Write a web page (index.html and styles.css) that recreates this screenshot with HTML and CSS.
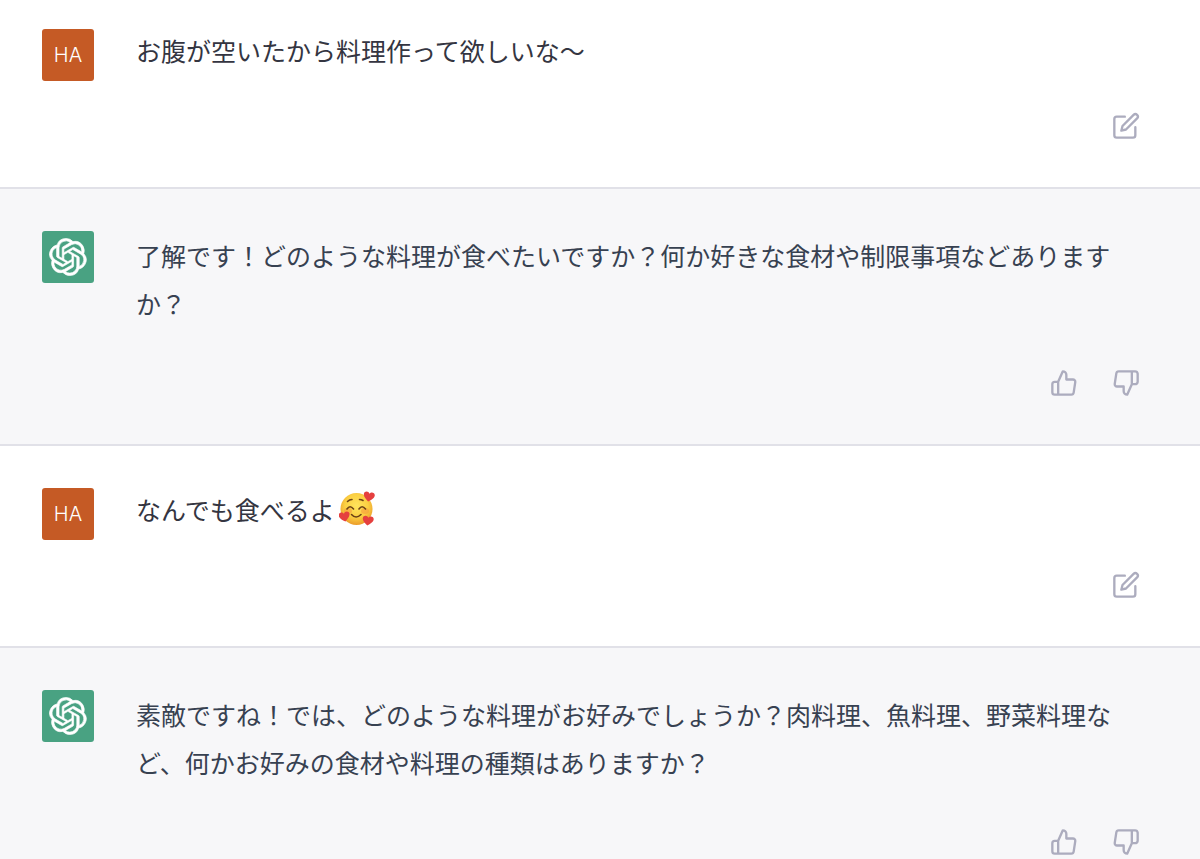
FILE: index.html
```html
<!DOCTYPE html>
<html lang="ja">
<head>
    <meta charset="UTF-8">
    <meta name="viewport" content="width=device-width, initial-scale=1.0">
    <title>Chat</title>
    <link rel="stylesheet" href="styles.css">
</head>
<body>

    <!-- shared icons -->
    <svg class="sprite" aria-hidden="true">
        <symbol id="icon-edit" viewBox="0 0 24 24">
            <path d="M11 4H4a2 2 0 0 0-2 2v14a2 2 0 0 0 2 2h14a2 2 0 0 0 2-2v-7"/>
            <path d="M18.5 2.5a2.121 2.121 0 0 1 3 3L12 15l-4 1 1-4 9.5-9.5z"/>
        </symbol>
        <symbol id="icon-up" viewBox="0 0 24 24">
            <path d="M14 9V5a3 3 0 0 0-3-3l-4 9v11h11.28a2 2 0 0 0 2-1.7l1.38-9a2 2 0 0 0-2-2.3zM7 22H4a2 2 0 0 1-2-2v-7a2 2 0 0 1 2-2h3"/>
        </symbol>
        <symbol id="icon-down" viewBox="0 0 24 24">
            <path d="M10 15v4a3 3 0 0 0 3 3l4-9V2H5.72a2 2 0 0 0-2 1.7l-1.38 9a2 2 0 0 0 2 2.3zm7-13h2.67A2.31 2.31 0 0 1 22 4v7a2.31 2.31 0 0 1-2.33 2H17"/>
        </symbol>
        <symbol id="icon-bot" viewBox="0 0 41 41">
            <path d="M37.532 16.87a9.963 9.963 0 0 0-.856-8.184 10.078 10.078 0 0 0-10.855-4.835A9.964 9.964 0 0 0 18.306.5a10.079 10.079 0 0 0-9.614 6.977 9.967 9.967 0 0 0-6.664 4.834 10.08 10.08 0 0 0 1.24 11.817 9.965 9.965 0 0 0 .856 8.185 10.079 10.079 0 0 0 10.855 4.835 9.965 9.965 0 0 0 7.516 3.35 10.078 10.078 0 0 0 9.617-6.981 9.967 9.967 0 0 0 6.663-4.834 10.079 10.079 0 0 0-1.243-11.813zM22.498 37.886a7.474 7.474 0 0 1-4.799-1.735c.061-.033.168-.091.237-.134l7.964-4.6a1.294 1.294 0 0 0 .655-1.134V19.054l3.366 1.944a.12.12 0 0 1 .066.092v9.299a7.505 7.505 0 0 1-7.49 7.496zM6.392 31.006a7.471 7.471 0 0 1-.894-5.023c.06.036.162.099.237.141l7.964 4.6a1.297 1.297 0 0 0 1.308 0l9.724-5.614v3.888a.12.12 0 0 1-.048.103l-8.051 4.649a7.504 7.504 0 0 1-10.24-2.744zM4.297 13.62A7.469 7.469 0 0 1 8.2 10.333c0 .068-.004.19-.004.274v9.201a1.294 1.294 0 0 0 .654 1.132l9.723 5.614-3.366 1.944a.12.12 0 0 1-.114.01L7.04 23.856a7.504 7.504 0 0 1-2.743-10.237zm27.658 6.437l-9.724-5.615 3.367-1.943a.121.121 0 0 1 .113-.01l8.052 4.648a7.498 7.498 0 0 1-1.158 13.528v-9.476a1.293 1.293 0 0 0-.65-1.132zm3.35-5.043c-.059-.037-.162-.099-.236-.141l-7.965-4.6a1.298 1.298 0 0 0-1.308 0l-9.723 5.614v-3.888a.12.12 0 0 1 .048-.103l8.05-4.645a7.497 7.497 0 0 1 11.135 7.763zm-21.063 6.929l-3.367-1.944a.12.12 0 0 1-.065-.092v-9.299a7.497 7.497 0 0 1 12.293-5.756 6.94 6.94 0 0 0-.236.134l-7.965 4.6a1.294 1.294 0 0 0-.654 1.132l-.006 11.225zm1.829-3.943l4.33-2.501 4.332 2.5v5l-4.331 2.5-4.331-2.5V18z" stroke-width="0.7"/>
        </symbol>
    </svg>

    <main class="chat">
        <div class="message user">
            <div class="avatar">HA</div>
            <div class="body">
                <p class="text">お腹が空いたから料理作って欲しいな〜</p>
                <div class="actions">
                    <button class="action-btn" type="button" aria-label="編集"><svg class="icon"><use href="#icon-edit"/></svg></button>
                </div>
            </div>
        </div>

        <div class="message bot">
            <div class="avatar"><svg class="logo"><use href="#icon-bot"/></svg></div>
            <div class="body">
                <p class="text">了解です！どのような料理が食べたいですか？何か好きな食材や制限事項などありますか？</p>
                <div class="actions">
                    <button class="action-btn" type="button" aria-label="良い"><svg class="icon"><use href="#icon-up"/></svg></button>
                    <button class="action-btn" type="button" aria-label="悪い"><svg class="icon"><use href="#icon-down"/></svg></button>
                </div>
            </div>
        </div>

        <div class="message user">
            <div class="avatar">HA</div>
            <div class="body">
                <p class="text">なんでも食べるよ<svg class="emoji" viewBox="0 0 36 36" role="img" aria-label="🥰">
                    <defs>
                        <radialGradient id="face" cx="50%" cy="40%" r="60%">
                            <stop offset="0" stop-color="#ffe45c"/>
                            <stop offset="0.6" stop-color="#fbd043"/>
                            <stop offset="1" stop-color="#eb9c2a"/>
                        </radialGradient>
                        <path id="heart" d="M0 5C-2 3.500-5.500 1-5.500-1.800c0-3 4.200-3.800 5.500-.9 1.300-2.900 5.500-2.100 5.500.9C5.500 1 2 3.500 0 5z"/>
                    </defs>
                    <circle cx="17.500" cy="18" r="16" fill="url(#face)"/>
                    <ellipse cx="9" cy="20" rx="4" ry="3" fill="#f5913c" opacity="0.5"/>
                    <ellipse cx="26" cy="20" rx="4" ry="3" fill="#f5913c" opacity="0.5"/>
                    <g fill="none" stroke="#6d4216" stroke-width="1.600" stroke-linecap="round">
                        <path d="M8.500 10.500q2-2 4.500-2M20.500 8.500q2 0 3.500 1"/>
                        <path d="M8 18q3-4.500 6.500 0M20 18q3-4.500 6.500 0"/>
                        <path d="M12.500 23.500q4.500 5 9.500 0"/>
                    </g>
                    <g fill="#e5403f">
                        <use href="#heart" transform="translate(30 5.500) rotate(10)"/>
                        <use href="#heart" transform="translate(5.500 25.500) rotate(-12)"/>
                        <use href="#heart" transform="translate(29 29.500) rotate(8)"/>
                    </g>
                </svg></p>
                <div class="actions">
                    <button class="action-btn" type="button" aria-label="編集"><svg class="icon"><use href="#icon-edit"/></svg></button>
                </div>
            </div>
        </div>

        <div class="message bot">
            <div class="avatar"><svg class="logo"><use href="#icon-bot"/></svg></div>
            <div class="body">
                <p class="text">素敵ですね！では、どのような料理がお好みでしょうか？肉料理、魚料理、野菜料理など、何かお好みの食材や料理の種類はありますか？</p>
                <div class="actions">
                    <button class="action-btn" type="button" aria-label="良い"><svg class="icon"><use href="#icon-up"/></svg></button>
                    <button class="action-btn" type="button" aria-label="悪い"><svg class="icon"><use href="#icon-down"/></svg></button>
                </div>
            </div>
        </div>
    </main>

</body>
</html>
```

FILE: styles.css
```css
* {
    margin: 0;
    padding: 0;
    box-sizing: border-box;
}

body {
    background-color: #ffffff;
    font-family: "Noto Sans CJK JP", sans-serif;
}

.sprite {
    display: none;
}

.chat {
    height: 100vh;
    overflow-y: auto;
    scrollbar-width: none;
}

.message {
    display: flex;
    align-items: flex-start;
    gap: 42px;
    padding: 42px 55px 42px 42px;
    border-bottom: 2px solid #e1e1e8;
}

.message:first-child {
    padding-top: 29px;
}

.user {
    color: #343541;
}

.bot {
    background-color: #f7f7f9;
    color: #374151;
}

.avatar {
    display: flex;
    align-items: center;
    justify-content: center;
    flex-shrink: 0;
    width: 52px;
    height: 52px;
    border-radius: 3px;
    background-color: #c55a25;
    color: #ffffff;
    font-family: Inter, sans-serif;
    font-size: 20px;
    font-weight: 300;
}

.bot .avatar {
    background-color: #49a282;
}

.logo {
    width: 38px;
    height: 38px;
    fill: #ffffff;
    stroke: #ffffff;
}

.body {
    flex: 1;
    min-width: 0;
}

.text {
    padding-right: 15px;
    font-size: 25px;
    line-height: 42px;
}

.bot .text {
    line-height: 48px;
}

.emoji {
    display: inline-block;
    width: 36px;
    height: 36px;
    margin-top: 3px;
    margin-left: 4px;
    vertical-align: top;
}

.actions {
    display: flex;
    justify-content: flex-end;
    gap: 24px;
    margin-top: 36px;
}

.bot .actions {
    margin-top: 37px;
}

.action-btn {
    display: flex;
    padding: 5px;
    border: none;
    border-radius: 6px;
    background: none;
    color: #acacbe;
    cursor: pointer;
}

.action-btn:hover {
    color: #40414f;
}

.icon {
    width: 28px;
    height: 28px;
    fill: none;
    stroke: currentColor;
    stroke-width: 2;
    stroke-linecap: round;
    stroke-linejoin: round;
}
```
